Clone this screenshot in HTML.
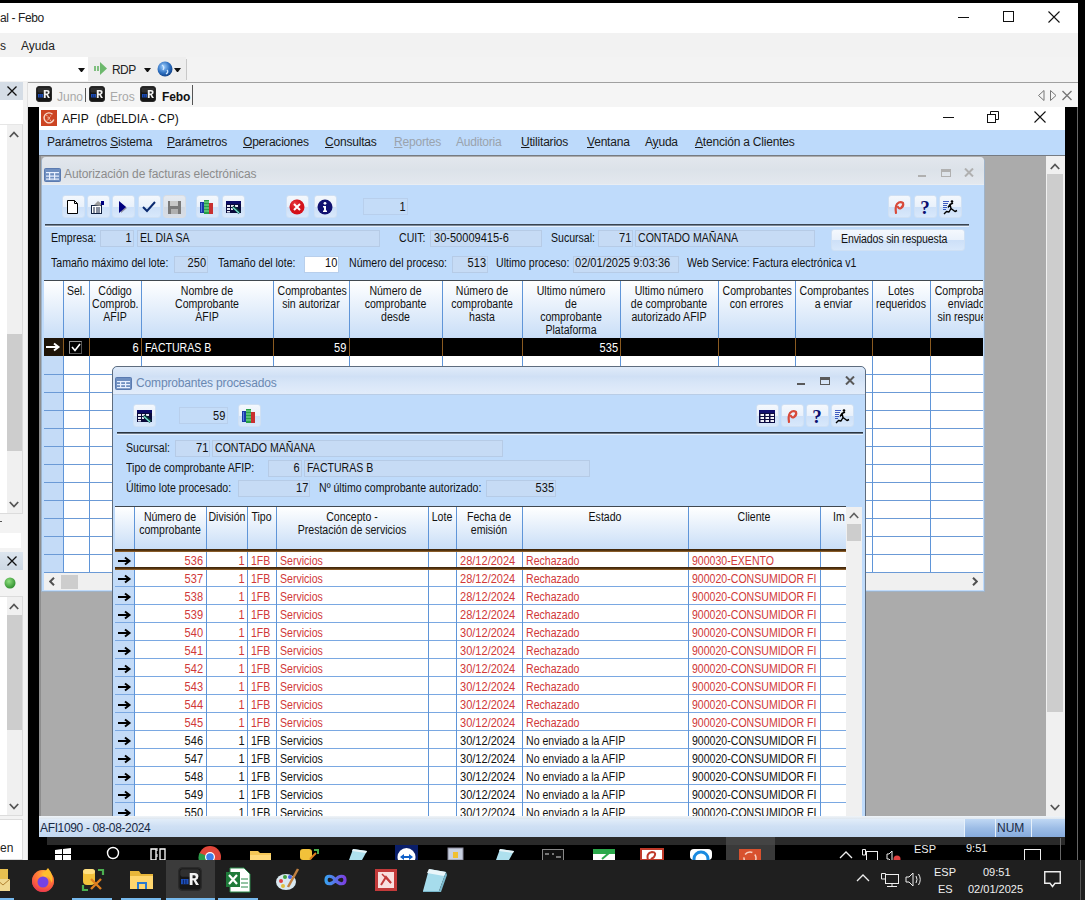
<!DOCTYPE html>
<html><head><meta charset="utf-8">
<style>
*{box-sizing:border-box}
body{margin:0;width:1085px;height:900px;overflow:hidden;background:#000;position:relative;font-family:"Liberation Sans",sans-serif;font-size:11px;color:#000}
.a{position:absolute}
.t{position:absolute;white-space:nowrap;line-height:1;color:#111}
.m{position:absolute;white-space:nowrap;line-height:1;letter-spacing:-0.15px;color:#1a1a1a}
.fld{position:absolute;background:#c6dbf5;border:1px solid #b6cbe6}
.btn{position:absolute;border-radius:3px;border:1px solid #cfe0f4;background:linear-gradient(#f4f8fd 0,#e9f1fb 50%,#cde0f8 52%,#d8e8fb 100%)}
.hdr{position:absolute;background:linear-gradient(#ffffff,#c9def7)}
u{text-decoration:underline;text-underline-offset:1px;text-decoration-thickness:1px}
</style></head><body>

<div class="a" style="left:0px;top:3px;width:1078px;height:30px;background:#fff"></div>
<div class="m" style="left:0px;top:11.84px;font-size:12px;color:#222;letter-spacing:-0.4px">al - Febo</div>
<div class="a" style="left:958px;top:17px;width:11px;height:1px;background:#111"></div>
<div class="a" style="left:1003px;top:11px;width:11px;height:11px;border:1px solid #111"></div>
<svg class="a" style="left:1048px;top:11px" width="12" height="12"><path d="M0.5 0.5L11.5 11.5M11.5 0.5L0.5 11.5" stroke="#111" stroke-width="1.1"/></svg>
<div class="a" style="left:0px;top:33px;width:1078px;height:24px;background:#f2f2f2"></div>
<div class="m" style="left:0px;top:39.84px;font-size:12px;color:#222;letter-spacing:0">s</div>
<div class="m" style="left:21px;top:39.84px;font-size:12px;color:#222;letter-spacing:0">Ayuda</div>
<div class="a" style="left:0px;top:57px;width:1078px;height:25px;background:#f3f3f3"></div>
<div class="a" style="left:88px;top:57px;width:98px;height:24px;background:#eeeeee"></div>
<div class="a" style="left:0px;top:57px;width:88px;height:24px;background:#fff"></div>
<div class="a" style="left:78px;top:68px;width:7px;height:0px;border-top:4px solid #111;border-left:3.5px solid transparent;border-right:3.5px solid transparent;width:7px;height:0"></div>
<svg class="a" style="left:94px;top:62px" width="14" height="13"><rect x="0" y="4" width="2" height="5" fill="#7fbf7f"/><rect x="3" y="4" width="2" height="5" fill="#7fbf7f"/><path d="M6 0L13 6.5L6 13Z" fill="#6cb86c"/></svg>
<div class="m" style="left:112px;top:63.84px;font-size:12px;color:#222;letter-spacing:-0.6px">RDP</div>
<div class="a" style="left:144px;top:68px;width:7px;height:0px;border-top:4px solid #111;border-left:3.5px solid transparent;border-right:3.5px solid transparent;width:7px;height:0"></div>
<svg class="a" style="left:157px;top:61px" width="16" height="16"><defs><radialGradient id="gl" cx="0.4" cy="0.35" r="0.7"><stop offset="0" stop-color="#9fd0ff"/><stop offset="0.6" stop-color="#2d6fc0"/><stop offset="1" stop-color="#0f3c80"/></radialGradient></defs><circle cx="8" cy="8" r="7.5" fill="url(#gl)"/><path d="M5 4Q8 6 6 9M10 9Q12 11 9 13" stroke="#d0e8ff" stroke-width="1.3" fill="none"/></svg>
<div class="a" style="left:174px;top:68px;width:7px;height:0px;border-top:4px solid #111;border-left:3.5px solid transparent;border-right:3.5px solid transparent;width:7px;height:0"></div>
<div class="a" style="left:186px;top:59px;width:1px;height:21px;background:#c8c8c8"></div>
<div class="a" style="left:0px;top:82px;width:28px;height:778px;background:#f3f3f3"></div>
<div class="a" style="left:0px;top:99px;width:23px;height:25px;background:#fff"></div>
<div class="a" style="left:0px;top:82px;width:23px;height:18px;background:#d5dde6"></div>
<svg class="a" style="left:7px;top:86px" width="10" height="10"><path d="M0.5 0.5L9.5 9.5M9.5 0.5L0.5 9.5" stroke="#111" stroke-width="1.3"/></svg>
<div class="a" style="left:27px;top:82px;width:1051px;height:25px;background:#f5f5f5;border-top:1px solid #a0a0a0;border-left:1px solid #a0a0a0"></div>
<svg class="a" style="left:36px;top:86px" width="16" height="16" viewBox="0 0 16 16"><rect x="0.5" y="0.5" width="15" height="15" rx="2.5" fill="#161616" stroke="#2a2a2a"/><rect x="1.5" y="1.5" width="13" height="5" rx="1.5" fill="#3a3a3a" opacity="0.7"/><rect x="2" y="8" width="5" height="3.5" fill="#1d4fb8"/><path d="M3.6 8.5V11.5M5.3 8.5V11.5" stroke="#0a1a50" stroke-width="0.6"/><path d="M7.8 12V4H11Q13.6 4 13.6 6.4Q13.6 8.2 11.9 8.6L14 12H12L10.3 8.9H9.7V12Z M9.7 5.5V7.5H10.9Q11.8 7.5 11.8 6.5Q11.8 5.5 10.9 5.5Z" fill="#f2f2f2" fill-rule="evenodd"/></svg>
<div class="m" style="left:57px;top:90.84px;font-size:12px;color:#a8a8a8;letter-spacing:0">Juno</div>
<div class="a" style="left:85px;top:88px;width:1px;height:14px;background:#555"></div>
<svg class="a" style="left:89px;top:86px" width="16" height="16" viewBox="0 0 16 16"><rect x="0.5" y="0.5" width="15" height="15" rx="2.5" fill="#161616" stroke="#2a2a2a"/><rect x="1.5" y="1.5" width="13" height="5" rx="1.5" fill="#3a3a3a" opacity="0.7"/><rect x="2" y="8" width="5" height="3.5" fill="#1d4fb8"/><path d="M3.6 8.5V11.5M5.3 8.5V11.5" stroke="#0a1a50" stroke-width="0.6"/><path d="M7.8 12V4H11Q13.6 4 13.6 6.4Q13.6 8.2 11.9 8.6L14 12H12L10.3 8.9H9.7V12Z M9.7 5.5V7.5H10.9Q11.8 7.5 11.8 6.5Q11.8 5.5 10.9 5.5Z" fill="#f2f2f2" fill-rule="evenodd"/></svg>
<div class="m" style="left:110px;top:90.84px;font-size:12px;color:#a8a8a8;letter-spacing:0">Eros</div>
<svg class="a" style="left:140px;top:86px" width="16" height="16" viewBox="0 0 16 16"><rect x="0.5" y="0.5" width="15" height="15" rx="2.5" fill="#161616" stroke="#2a2a2a"/><rect x="1.5" y="1.5" width="13" height="5" rx="1.5" fill="#3a3a3a" opacity="0.7"/><rect x="2" y="8" width="5" height="3.5" fill="#1d4fb8"/><path d="M3.6 8.5V11.5M5.3 8.5V11.5" stroke="#0a1a50" stroke-width="0.6"/><path d="M7.8 12V4H11Q13.6 4 13.6 6.4Q13.6 8.2 11.9 8.6L14 12H12L10.3 8.9H9.7V12Z M9.7 5.5V7.5H10.9Q11.8 7.5 11.8 6.5Q11.8 5.5 10.9 5.5Z" fill="#f2f2f2" fill-rule="evenodd"/></svg>
<div class="m" style="left:162px;top:90.84px;font-size:12px;color:#111;letter-spacing:-0.1px"><b>Febo</b></div>
<div class="a" style="left:192px;top:85px;width:1px;height:20px;background:#555"></div>
<svg class="a" style="left:1037px;top:90px" width="40" height="11"><path d="M7 0.5V10.5L1.5 5.5Z" fill="none" stroke="#777"/><path d="M13.5 0.5V10.5L19 5.5Z" fill="none" stroke="#777"/><path d="M25.5 1L34.5 10M34.5 1L25.5 10" stroke="#777" stroke-width="1.4"/></svg>
<div class="a" style="left:0px;top:124px;width:23px;height:390px;background:#fff;border-top:1px solid #e6e6e6;border-right:1px solid #dcdcdc;border-bottom:1px solid #dcdcdc"></div>
<div class="a" style="left:7px;top:125px;width:15px;height:388px;background:#f0f0f0"></div>
<div class="a" style="left:7px;top:334px;width:15px;height:117px;background:#cdcdcd"></div>
<svg class="a" style="left:9px;top:131px" width="10" height="7"><path d="M0.8 6L5 1.5L9.2 6" stroke="#555" stroke-width="1.8" fill="none"/></svg>
<svg class="a" style="left:9px;top:501px" width="10" height="7"><path d="M0.8 1L5 5.5L9.2 1" stroke="#555" stroke-width="1.8" fill="none"/></svg>
<div class="a" style="left:0px;top:533px;width:21px;height:15px;background:#fff"></div>
<div class="a" style="left:0px;top:521px;width:2px;height:1px;background:#555"></div>
<div class="a" style="left:0px;top:552px;width:23px;height:18px;background:linear-gradient(#dce5ee,#cdd8e3)"></div>
<svg class="a" style="left:7px;top:556px" width="10" height="10"><path d="M0.5 0.5L9.5 9.5M9.5 0.5L0.5 9.5" stroke="#111" stroke-width="1.3"/></svg>
<svg class="a" style="left:4px;top:577px" width="12" height="12"><defs><radialGradient id="gd" cx="0.4" cy="0.35" r="0.7"><stop offset="0" stop-color="#8fe07f"/><stop offset="1" stop-color="#2a8a2a"/></radialGradient></defs><circle cx="6" cy="6" r="5.5" fill="url(#gd)"/></svg>
<div class="a" style="left:0px;top:596px;width:23px;height:220px;background:#fff;border:1px solid #dcdcdc;border-left:none"></div>
<div class="a" style="left:7px;top:597px;width:15px;height:218px;background:#f0f0f0"></div>
<div class="a" style="left:7px;top:615px;width:15px;height:115px;background:#cdcdcd"></div>
<svg class="a" style="left:9px;top:603px" width="10" height="7"><path d="M0.8 6L5 1.5L9.2 6" stroke="#555" stroke-width="1.8" fill="none"/></svg>
<svg class="a" style="left:9px;top:803px" width="10" height="7"><path d="M0.8 1L5 5.5L9.2 1" stroke="#555" stroke-width="1.8" fill="none"/></svg>
<div class="a" style="left:0px;top:819px;width:23px;height:41px;background:#fff;border:1px solid #dcdcdc;border-left:none"></div>
<div class="m" style="left:0px;top:841.84px;font-size:12px;color:#222;letter-spacing:0">en</div>
<div class="a" style="left:27px;top:82px;width:1px;height:778px;background:#e0e0e0"></div>
<div class="a" style="left:28px;top:107px;width:11px;height:731px;background:#000"></div>
<div class="a" style="left:1065px;top:107px;width:13px;height:731px;background:#000"></div>
<div class="a" style="left:39px;top:107px;width:1026px;height:23px;background:#fff"></div>
<div class="a" style="left:39px;top:130px;width:1026px;height:27px;background:#bddafb;border-bottom:2px solid #767b82"></div>
<div class="a" style="left:39px;top:156px;width:1007px;height:660px;background:#ababab;border-left:2px solid #8e8e8e"></div>
<div class="a" style="left:1046px;top:156px;width:19px;height:660px;background:#f0f0f0"></div>
<div class="a" style="left:1047px;top:174px;width:16px;height:538px;background:#cdcdcd"></div>
<svg class="a" style="left:1050px;top:163px" width="10" height="7"><path d="M0.8 6L5 1.5L9.2 6" stroke="#555" stroke-width="1.8" fill="none"/></svg>
<svg class="a" style="left:1050px;top:804px" width="10" height="7"><path d="M0.8 1L5 5.5L9.2 1" stroke="#555" stroke-width="1.8" fill="none"/></svg>
<svg class="a" style="left:41px;top:110px" width="16" height="16"><rect width="16" height="16" fill="#cc4422"/><path d="M11.5 4.2A5 5 0 1 0 12.8 9.5" fill="none" stroke="#f8d8c8" stroke-width="1.4"/><path d="M5.5 5L10 11M10 5.5L6 10.5" stroke="#f0b8a0" stroke-width="1.2" stroke-dasharray="1.2 0.8"/></svg>
<div class="m" style="left:62px;top:112.84px;font-size:12px;color:#111;letter-spacing:0">AFIP</div>
<div class="m" style="left:96px;top:112.84px;font-size:12px;color:#111;letter-spacing:0">(dbELDIA - CP)</div>
<div class="a" style="left:943px;top:117px;width:11px;height:1px;background:#111"></div>
<svg class="a" style="left:987px;top:111px" width="12" height="12"><rect x="0.5" y="3.5" width="8" height="8" fill="none" stroke="#111"/><path d="M3.5 3.5V0.5H11.5V8.5H8.5" fill="none" stroke="#111"/></svg>
<svg class="a" style="left:1034px;top:111px" width="12" height="12"><path d="M0.5 0.5L11.5 11.5M11.5 0.5L0.5 11.5" stroke="#111" stroke-width="1.1"/></svg>
<div class="m" style="left:47px;top:135.84px;font-size:12px;color:#1a1a1a;letter-spacing:-0.2px">Parámetros <u>S</u>istema</div>
<div class="m" style="left:167px;top:135.84px;font-size:12px;color:#1a1a1a;letter-spacing:-0.2px"><u>P</u>arámetros</div>
<div class="m" style="left:243px;top:135.84px;font-size:12px;color:#1a1a1a;letter-spacing:-0.2px"><u>O</u>peraciones</div>
<div class="m" style="left:325px;top:135.84px;font-size:12px;color:#1a1a1a;letter-spacing:-0.2px"><u>C</u>onsultas</div>
<div class="m" style="left:394px;top:135.84px;font-size:12px;color:#9aa3ad;letter-spacing:-0.2px"><u>R</u>eportes</div>
<div class="m" style="left:456px;top:135.84px;font-size:12px;color:#9aa3ad;letter-spacing:-0.2px">Auditoria</div>
<div class="m" style="left:521px;top:135.84px;font-size:12px;color:#1a1a1a;letter-spacing:-0.2px"><u>U</u>tilitarios</div>
<div class="m" style="left:587px;top:135.84px;font-size:12px;color:#1a1a1a;letter-spacing:-0.2px"><u>V</u>entana</div>
<div class="m" style="left:645px;top:135.84px;font-size:12px;color:#1a1a1a;letter-spacing:-0.2px">A<u>y</u>uda</div>
<div class="m" style="left:695px;top:135.84px;font-size:12px;color:#1a1a1a;letter-spacing:-0.2px"><u>A</u>tención a Clientes</div>
<div class="a" style="left:41px;top:157px;width:944px;height:435px;background:#bfdbfb;border:1px solid #9fb3c8;border-top-color:#c0c8d0;border-radius:5px 5px 0 0"></div>
<div class="a" style="left:42px;top:157px;width:942px;height:28px;background:linear-gradient(#e2e7ed,#dce2e9 45%,#e3e8ee 100%);border-bottom:1px solid #e9edf2;border-radius:4px 4px 0 0"></div>
<svg class="a" style="left:44px;top:168px" width="17" height="14"><rect x="0.5" y="0.5" width="16" height="13" rx="1" fill="#6f8fc0" stroke="#5a7ab0"/><rect x="2" y="4" width="13" height="1.2" fill="#e8f0ff"/><rect x="2" y="7.5" width="13" height="1.2" fill="#e8f0ff"/><rect x="2" y="10.5" width="13" height="1.2" fill="#e8f0ff"/><rect x="5" y="4" width="1.2" height="8" fill="#e8f0ff"/><rect x="10" y="4" width="1.2" height="8" fill="#e8f0ff"/></svg>
<div class="m" style="left:64px;top:167.84px;font-size:12px;color:#8c8c8c;letter-spacing:-0.1px">Autorización de facturas electrónicas</div>
<div class="a" style="left:918px;top:175px;width:8px;height:2px;background:#b0b0b0"></div>
<div class="a" style="left:941px;top:169px;width:10px;height:8px;border:1px solid #b0b0b0;border-top-width:3px"></div>
<svg class="a" style="left:964px;top:168px" width="10" height="9"><path d="M1 0.5L9 8.5M9 0.5L1 8.5" stroke="#b0b0b0" stroke-width="2"/></svg>
<div class="btn" style="left:62px;top:195px;width:23px;height:23px;"></div>
<svg class="a" style="left:65px;top:199px" width="16" height="16" viewBox="0 0 16 16"><defs><radialGradient id="rg" cx="0.35" cy="0.3" r="0.7"><stop offset="0" stop-color="#ff6060" stop-opacity="0.6"/><stop offset="1" stop-color="#a00000" stop-opacity="0"/></radialGradient></defs><path d="M2.5 1.5H9.5L12.5 4.5V14.5H2.5Z" fill="#fff" stroke="#000"/><path d="M9.5 1.5V4.5H12.5" fill="none" stroke="#000"/></svg>
<div class="btn" style="left:87px;top:195px;width:23px;height:23px;"></div>
<svg class="a" style="left:90px;top:199px" width="16" height="16" viewBox="0 0 16 16"><defs><radialGradient id="rg" cx="0.35" cy="0.3" r="0.7"><stop offset="0" stop-color="#ff6060" stop-opacity="0.6"/><stop offset="1" stop-color="#a00000" stop-opacity="0"/></radialGradient></defs><rect x="1.5" y="6.5" width="10" height="8" fill="#fff" stroke="#102040"/><path d="M3 9H5M6 9H10M3 11H5M6 11H10M3 13H5M6 13H10" stroke="#102040"/><path d="M4 6L8 2L12 5L10 7Z" fill="#9a9a9a"/><path d="M11 2H14V6H11Z" fill="#000080"/></svg>
<div class="btn" style="left:112px;top:195px;width:23px;height:23px;"></div>
<svg class="a" style="left:115px;top:199px" width="16" height="16" viewBox="0 0 16 16"><defs><radialGradient id="rg" cx="0.35" cy="0.3" r="0.7"><stop offset="0" stop-color="#ff6060" stop-opacity="0.6"/><stop offset="1" stop-color="#a00000" stop-opacity="0"/></radialGradient></defs><path d="M6 4L12 9L6 14Z" fill="#9090a0"/><path d="M4 2L11 8L4 14Z" fill="#000080"/></svg>
<div class="btn" style="left:138px;top:195px;width:23px;height:23px;"></div>
<svg class="a" style="left:141px;top:199px" width="16" height="16" viewBox="0 0 16 16"><defs><radialGradient id="rg" cx="0.35" cy="0.3" r="0.7"><stop offset="0" stop-color="#ff6060" stop-opacity="0.6"/><stop offset="1" stop-color="#a00000" stop-opacity="0"/></radialGradient></defs><path d="M2 8L6 12L14 3" stroke="#0a2a70" stroke-width="2" fill="none"/></svg>
<div class="btn" style="left:163px;top:195px;width:23px;height:23px;background:linear-gradient(#e6eaf0 0,#dde3ea 50%,#d2d9e2 52%,#d8dee6 100%);border-color:#d8dde4"></div>
<svg class="a" style="left:166px;top:199px" width="16" height="16" viewBox="0 0 16 16"><defs><radialGradient id="rg" cx="0.35" cy="0.3" r="0.7"><stop offset="0" stop-color="#ff6060" stop-opacity="0.6"/><stop offset="1" stop-color="#a00000" stop-opacity="0"/></radialGradient></defs><rect x="2" y="2" width="13" height="13" fill="#7a7a7a"/><rect x="4" y="2" width="8" height="5" fill="#c8c8c8"/><rect x="5" y="10" width="7" height="5" fill="#b0b0b0"/></svg>
<div class="btn" style="left:196px;top:195px;width:23px;height:23px;"></div>
<svg class="a" style="left:199px;top:199px" width="16" height="16" viewBox="0 0 16 16"><defs><radialGradient id="rg" cx="0.35" cy="0.3" r="0.7"><stop offset="0" stop-color="#ff6060" stop-opacity="0.6"/><stop offset="1" stop-color="#a00000" stop-opacity="0"/></radialGradient></defs><rect x="1" y="3" width="4" height="11" fill="#1a3aa8"/><rect x="5" y="1" width="5" height="14" fill="#28a048"/><path d="M5 3H10M5 6H10M5 9H10M5 12H10" stroke="#8ae0a0" stroke-width="1"/><rect x="10" y="4" width="4" height="11" fill="#c83030"/><rect x="2" y="4" width="1" height="9" fill="#5a7ae0"/></svg>
<div class="btn" style="left:222px;top:195px;width:23px;height:23px;"></div>
<svg class="a" style="left:225px;top:199px" width="16" height="16" viewBox="0 0 16 16"><defs><radialGradient id="rg" cx="0.35" cy="0.3" r="0.7"><stop offset="0" stop-color="#ff6060" stop-opacity="0.6"/><stop offset="1" stop-color="#a00000" stop-opacity="0"/></radialGradient></defs><rect x="1" y="2" width="15" height="12" fill="#0a0a3a"/><rect x="1" y="2" width="15" height="3" fill="#0c0c66"/><path d="M2 6H5V8H2ZM6 6H9V8H6ZM10 6H13V8H10ZM2 9H5V11H2ZM6 9H8V11H6ZM2 12H5V13.5H2Z" fill="#e8eaf4"/><path d="M6.5 8.5L13.5 15L16 12.5L9 6.5Z" fill="#0a3a36"/><path d="M8 8.6L14 14" stroke="#7ae0d0" stroke-width="1.4"/></svg>
<div class="btn" style="left:286px;top:195px;width:23px;height:23px;"></div>
<svg class="a" style="left:289px;top:199px" width="16" height="16" viewBox="0 0 16 16"><defs><radialGradient id="rg" cx="0.35" cy="0.3" r="0.7"><stop offset="0" stop-color="#ff6060" stop-opacity="0.6"/><stop offset="1" stop-color="#a00000" stop-opacity="0"/></radialGradient></defs><circle cx="8" cy="8" r="7.5" fill="#d8101a"/><circle cx="8" cy="8" r="7.5" fill="url(#rg)"/><path d="M5 5L11 11M11 5L5 11" stroke="#fff" stroke-width="2"/></svg>
<div class="btn" style="left:314px;top:195px;width:23px;height:23px;"></div>
<svg class="a" style="left:317px;top:199px" width="16" height="16" viewBox="0 0 16 16"><defs><radialGradient id="rg" cx="0.35" cy="0.3" r="0.7"><stop offset="0" stop-color="#ff6060" stop-opacity="0.6"/><stop offset="1" stop-color="#a00000" stop-opacity="0"/></radialGradient></defs><circle cx="8" cy="8" r="7.5" fill="#101070"/><circle cx="8" cy="4.3" r="1.4" fill="#fff"/><path d="M6 7H9V11.5H10V13H6V11.5H7V8.5H6Z" fill="#fff"/></svg>
<div class="btn" style="left:888px;top:195px;width:23px;height:23px;"></div>
<svg class="a" style="left:891px;top:199px" width="16" height="16" viewBox="0 0 16 16"><defs><radialGradient id="rg" cx="0.35" cy="0.3" r="0.7"><stop offset="0" stop-color="#ff6060" stop-opacity="0.6"/><stop offset="1" stop-color="#a00000" stop-opacity="0"/></radialGradient></defs><path d="M5 14Q4 8 6 5Q9 2 12 4Q13 7 10 9Q8 10 7 8" stroke="#d84a3a" stroke-width="2.2" fill="none" stroke-linecap="round"/></svg>
<div class="btn" style="left:914px;top:195px;width:23px;height:23px;"></div>
<svg class="a" style="left:917px;top:199px" width="16" height="16" viewBox="0 0 16 16"><defs><radialGradient id="rg" cx="0.35" cy="0.3" r="0.7"><stop offset="0" stop-color="#ff6060" stop-opacity="0.6"/><stop offset="1" stop-color="#a00000" stop-opacity="0"/></radialGradient></defs><text x="8" y="14.5" text-anchor="middle" font-family="Liberation Serif" font-weight="bold" font-size="19" fill="#0a1070">?</text></svg>
<div class="btn" style="left:939px;top:195px;width:23px;height:23px;"></div>
<svg class="a" style="left:942px;top:199px" width="16" height="16" viewBox="0 0 16 16"><defs><radialGradient id="rg" cx="0.35" cy="0.3" r="0.7"><stop offset="0" stop-color="#ff6060" stop-opacity="0.6"/><stop offset="1" stop-color="#a00000" stop-opacity="0"/></radialGradient></defs><path d="M1 2.5H7M1 4.5H6M1 6.5H5M1 8.5H5M1 10.5H4" stroke="#2a4ab8" stroke-width="0.9"/><path d="M2 15L4.5 12.5L7 13L9 9.5L13 12.5L15 11.5M9 9.5L8 5.5L11 4M8 5.5L6 8.5" stroke="#000" stroke-width="1.4" fill="none" stroke-linejoin="round"/><circle cx="10" cy="2.5" r="1.3" fill="#000"/></svg>
<div class="a" style="left:363px;top:198px;width:45px;height:17px;background:#c4dcf8;border:1px solid #b8cfec"></div>
<div class="t" style="right:679px;top:200.84px;font-size:12px;transform:scaleX(0.92);transform-origin:100% 0;">1</div>
<div class="a" style="left:45px;top:224px;width:924px;height:2px;background:#3a4450;border-bottom:1px solid #7a8898"></div>
<div class="a" style="left:45px;top:226px;width:924px;height:1px;background:#e6f0fc"></div>
<div class="t" style="left:51px;top:231.84px;font-size:12px;transform:scaleX(0.88);transform-origin:0 0;">Empresa:</div>
<div class="fld" style="left:100px;top:230px;width:34px;height:17px"></div>
<div class="t" style="right:953px;top:231.84px;font-size:12px;transform:scaleX(0.92);transform-origin:100% 0;">1</div>
<div class="fld" style="left:137px;top:230px;width:243px;height:17px"></div>
<div class="t" style="left:140px;top:231.84px;font-size:12px;transform:scaleX(0.88);transform-origin:0 0;">EL DIA SA</div>
<div class="t" style="left:399px;top:231.84px;font-size:12px;transform:scaleX(0.88);transform-origin:0 0;">CUIT:</div>
<div class="fld" style="left:430px;top:230px;width:112px;height:17px"></div>
<div class="t" style="left:434px;top:231.84px;font-size:12px;transform:scaleX(0.92);transform-origin:0 0;">30-50009415-6</div>
<div class="t" style="left:551px;top:231.84px;font-size:12px;transform:scaleX(0.88);transform-origin:0 0;">Sucursal:</div>
<div class="fld" style="left:598px;top:230px;width:35px;height:17px"></div>
<div class="t" style="right:454px;top:231.84px;font-size:12px;transform:scaleX(0.92);transform-origin:100% 0;">71</div>
<div class="fld" style="left:635px;top:230px;width:180px;height:17px"></div>
<div class="t" style="left:638px;top:231.84px;font-size:12px;transform:scaleX(0.88);transform-origin:0 0;">CONTADO MAÑANA</div>
<div class="btn" style="left:831px;top:229px;width:134px;height:22px"></div>
<div class="t" style="left:841px;top:232.84px;font-size:12px;transform:scaleX(0.88);transform-origin:0 0;letter-spacing:-0.15px">Enviados sin respuesta</div>
<div class="t" style="left:51px;top:256.84px;font-size:12px;transform:scaleX(0.88);transform-origin:0 0;">Tamaño máximo del lote:</div>
<div class="fld" style="left:174px;top:256px;width:34px;height:17px"></div>
<div class="t" style="right:879px;top:256.84px;font-size:12px;transform:scaleX(0.92);transform-origin:100% 0;">250</div>
<div class="t" style="left:218px;top:256.84px;font-size:12px;transform:scaleX(0.88);transform-origin:0 0;">Tamaño del lote:</div>
<div class="a" style="left:304px;top:256px;width:35px;height:17px;background:#fff;border:1px solid #b8cfec"></div>
<div class="t" style="right:748px;top:256.84px;font-size:12px;transform:scaleX(0.92);transform-origin:100% 0;">10</div>
<div class="t" style="left:349px;top:256.84px;font-size:12px;transform:scaleX(0.88);transform-origin:0 0;">Número del proceso:</div>
<div class="fld" style="left:452px;top:256px;width:36px;height:17px"></div>
<div class="t" style="right:599px;top:256.84px;font-size:12px;transform:scaleX(0.92);transform-origin:100% 0;">513</div>
<div class="t" style="left:496px;top:256.84px;font-size:12px;transform:scaleX(0.88);transform-origin:0 0;">Ultimo proceso:</div>
<div class="fld" style="left:573px;top:256px;width:106px;height:17px"></div>
<div class="t" style="left:575px;top:256.84px;font-size:12px;transform:scaleX(0.92);transform-origin:0 0;">02/01/2025 9:03:36</div>
<div class="t" style="left:687px;top:256.84px;font-size:12px;transform:scaleX(0.88);transform-origin:0 0;">Web Service: Factura electrónica v1</div>
<div class="a" style="left:44px;top:280px;width:939px;height:293px;background:#fff;border-top:1px solid #404850"></div>
<div class="hdr" style="left:44px;top:281px;width:939px;height:57px"></div>
<div class="a" style="left:44px;top:338px;width:19px;height:234px;background:#c4dbf7"></div>
<div class="a" style="left:44px;top:374px;width:939px;height:1px;background:#6b9ad6"></div>
<div class="a" style="left:44px;top:392px;width:939px;height:1px;background:#6b9ad6"></div>
<div class="a" style="left:44px;top:410px;width:939px;height:1px;background:#6b9ad6"></div>
<div class="a" style="left:44px;top:428px;width:939px;height:1px;background:#6b9ad6"></div>
<div class="a" style="left:44px;top:446px;width:939px;height:1px;background:#6b9ad6"></div>
<div class="a" style="left:44px;top:464px;width:939px;height:1px;background:#6b9ad6"></div>
<div class="a" style="left:44px;top:482px;width:939px;height:1px;background:#6b9ad6"></div>
<div class="a" style="left:44px;top:500px;width:939px;height:1px;background:#6b9ad6"></div>
<div class="a" style="left:44px;top:518px;width:939px;height:1px;background:#6b9ad6"></div>
<div class="a" style="left:44px;top:536px;width:939px;height:1px;background:#6b9ad6"></div>
<div class="a" style="left:44px;top:554px;width:939px;height:1px;background:#6b9ad6"></div>
<div class="a" style="left:44px;top:572px;width:939px;height:1px;background:#6b9ad6"></div>
<div class="a" style="left:44px;top:338px;width:939px;height:18px;background:#000"></div>
<div class="a" style="left:44px;top:338px;width:19px;height:18px;background:#1e1408"></div>
<div class="a" style="left:63px;top:281px;width:1px;height:291px;background:#5f95d8"></div>
<div class="a" style="left:89px;top:281px;width:1px;height:291px;background:#5f95d8"></div>
<div class="a" style="left:141px;top:281px;width:1px;height:291px;background:#5f95d8"></div>
<div class="a" style="left:273px;top:281px;width:1px;height:291px;background:#5f95d8"></div>
<div class="a" style="left:349px;top:281px;width:1px;height:291px;background:#5f95d8"></div>
<div class="a" style="left:442px;top:281px;width:1px;height:291px;background:#5f95d8"></div>
<div class="a" style="left:522px;top:281px;width:1px;height:291px;background:#5f95d8"></div>
<div class="a" style="left:620px;top:281px;width:1px;height:291px;background:#5f95d8"></div>
<div class="a" style="left:718px;top:281px;width:1px;height:291px;background:#5f95d8"></div>
<div class="a" style="left:795px;top:281px;width:1px;height:291px;background:#5f95d8"></div>
<div class="a" style="left:872px;top:281px;width:1px;height:291px;background:#5f95d8"></div>
<div class="a" style="left:930px;top:281px;width:1px;height:291px;background:#5f95d8"></div>
<div class="a" style="left:63px;top:338px;width:1px;height:18px;background:#8a5a20"></div>
<div class="a" style="left:89px;top:338px;width:1px;height:18px;background:#8a5a20"></div>
<div class="a" style="left:141px;top:338px;width:1px;height:18px;background:#8a5a20"></div>
<div class="a" style="left:273px;top:338px;width:1px;height:18px;background:#8a5a20"></div>
<div class="a" style="left:349px;top:338px;width:1px;height:18px;background:#8a5a20"></div>
<div class="a" style="left:442px;top:338px;width:1px;height:18px;background:#8a5a20"></div>
<div class="a" style="left:522px;top:338px;width:1px;height:18px;background:#8a5a20"></div>
<div class="a" style="left:620px;top:338px;width:1px;height:18px;background:#8a5a20"></div>
<div class="a" style="left:718px;top:338px;width:1px;height:18px;background:#8a5a20"></div>
<div class="a" style="left:795px;top:338px;width:1px;height:18px;background:#8a5a20"></div>
<div class="a" style="left:872px;top:338px;width:1px;height:18px;background:#8a5a20"></div>
<div class="a" style="left:930px;top:338px;width:1px;height:18px;background:#8a5a20"></div>
<div class="a" style="left:44px;top:281px;width:939px;height:57px;overflow:hidden">
<div class="t" style="left:19px;width:26px;text-align:center;top:3.84px;font-size:12px;transform:scaleX(0.88);transform-origin:50% 0">Sel.</div>
<div class="t" style="left:45px;width:52px;text-align:center;top:3.84px;font-size:12px;transform:scaleX(0.88);transform-origin:50% 0">Código</div>
<div class="t" style="left:45px;width:52px;text-align:center;top:16.84px;font-size:12px;transform:scaleX(0.88);transform-origin:50% 0">Comprob.</div>
<div class="t" style="left:45px;width:52px;text-align:center;top:29.84px;font-size:12px;transform:scaleX(0.88);transform-origin:50% 0">AFIP</div>
<div class="t" style="left:97px;width:132px;text-align:center;top:3.84px;font-size:12px;transform:scaleX(0.88);transform-origin:50% 0">Nombre de</div>
<div class="t" style="left:97px;width:132px;text-align:center;top:16.84px;font-size:12px;transform:scaleX(0.88);transform-origin:50% 0">Comprobante</div>
<div class="t" style="left:97px;width:132px;text-align:center;top:29.84px;font-size:12px;transform:scaleX(0.88);transform-origin:50% 0">AFIP</div>
<div class="t" style="left:229px;width:76px;text-align:center;top:3.84px;font-size:12px;transform:scaleX(0.88);transform-origin:50% 0">Comprobantes</div>
<div class="t" style="left:229px;width:76px;text-align:center;top:16.84px;font-size:12px;transform:scaleX(0.88);transform-origin:50% 0">sin autorizar</div>
<div class="t" style="left:305px;width:93px;text-align:center;top:3.84px;font-size:12px;transform:scaleX(0.88);transform-origin:50% 0">Número de</div>
<div class="t" style="left:305px;width:93px;text-align:center;top:16.84px;font-size:12px;transform:scaleX(0.88);transform-origin:50% 0">comprobante</div>
<div class="t" style="left:305px;width:93px;text-align:center;top:29.84px;font-size:12px;transform:scaleX(0.88);transform-origin:50% 0">desde</div>
<div class="t" style="left:398px;width:80px;text-align:center;top:3.84px;font-size:12px;transform:scaleX(0.88);transform-origin:50% 0">Número de</div>
<div class="t" style="left:398px;width:80px;text-align:center;top:16.84px;font-size:12px;transform:scaleX(0.88);transform-origin:50% 0">comprobante</div>
<div class="t" style="left:398px;width:80px;text-align:center;top:29.84px;font-size:12px;transform:scaleX(0.88);transform-origin:50% 0">hasta</div>
<div class="t" style="left:478px;width:98px;text-align:center;top:3.84px;font-size:12px;transform:scaleX(0.88);transform-origin:50% 0">Ultimo número</div>
<div class="t" style="left:478px;width:98px;text-align:center;top:16.84px;font-size:12px;transform:scaleX(0.88);transform-origin:50% 0">de</div>
<div class="t" style="left:478px;width:98px;text-align:center;top:29.84px;font-size:12px;transform:scaleX(0.88);transform-origin:50% 0">comprobante</div>
<div class="t" style="left:478px;width:98px;text-align:center;top:42.84px;font-size:12px;transform:scaleX(0.88);transform-origin:50% 0">Plataforma</div>
<div class="t" style="left:576px;width:98px;text-align:center;top:3.84px;font-size:12px;transform:scaleX(0.88);transform-origin:50% 0">Ultimo número</div>
<div class="t" style="left:576px;width:98px;text-align:center;top:16.84px;font-size:12px;transform:scaleX(0.88);transform-origin:50% 0">de comprobante</div>
<div class="t" style="left:576px;width:98px;text-align:center;top:29.84px;font-size:12px;transform:scaleX(0.88);transform-origin:50% 0">autorizado AFIP</div>
<div class="t" style="left:674px;width:77px;text-align:center;top:3.84px;font-size:12px;transform:scaleX(0.88);transform-origin:50% 0">Comprobantes</div>
<div class="t" style="left:674px;width:77px;text-align:center;top:16.84px;font-size:12px;transform:scaleX(0.88);transform-origin:50% 0">con errores</div>
<div class="t" style="left:751px;width:77px;text-align:center;top:3.84px;font-size:12px;transform:scaleX(0.88);transform-origin:50% 0">Comprobantes</div>
<div class="t" style="left:751px;width:77px;text-align:center;top:16.84px;font-size:12px;transform:scaleX(0.88);transform-origin:50% 0">a enviar</div>
<div class="t" style="left:828px;width:58px;text-align:center;top:3.84px;font-size:12px;transform:scaleX(0.88);transform-origin:50% 0">Lotes</div>
<div class="t" style="left:828px;width:58px;text-align:center;top:16.84px;font-size:12px;transform:scaleX(0.88);transform-origin:50% 0">requeridos</div>
<div class="t" style="left:886px;width:78px;text-align:center;top:3.84px;font-size:12px;transform:scaleX(0.88);transform-origin:50% 0">Comprobantes</div>
<div class="t" style="left:886px;width:78px;text-align:center;top:16.84px;font-size:12px;transform:scaleX(0.88);transform-origin:50% 0">enviados</div>
<div class="t" style="left:886px;width:78px;text-align:center;top:29.84px;font-size:12px;transform:scaleX(0.88);transform-origin:50% 0">sin respuesta</div>
</div>
<svg class="a" style="left:46px;top:342px" width="15" height="10"><path d="M0 5H11M8 1.5L12.5 5L8 8.5" stroke="#fff" stroke-width="2" fill="none"/></svg>
<div class="a" style="left:69px;top:341px;width:13px;height:13px;border:1px solid #909090;border-right-color:#555;border-bottom-color:#555"></div>
<svg class="a" style="left:71px;top:343px" width="10" height="9"><path d="M1 4L4 7.5L9 1" stroke="#fff" stroke-width="1.6" fill="none"/></svg>
<div class="t" style="right:946px;top:341.84px;font-size:12px;transform:scaleX(0.92);transform-origin:100% 0;color:#fff">6</div>
<div class="t" style="left:145px;top:341.84px;font-size:12px;transform:scaleX(0.88);transform-origin:0 0;color:#fff">FACTURAS B</div>
<div class="t" style="right:739px;top:341.84px;font-size:12px;transform:scaleX(0.92);transform-origin:100% 0;color:#fff">59</div>
<div class="t" style="right:467px;top:341.84px;font-size:12px;transform:scaleX(0.92);transform-origin:100% 0;color:#fff">535</div>
<div class="a" style="left:44px;top:573px;width:939px;height:17px;background:#f0f0f0"></div>
<div class="a" style="left:61px;top:575px;width:17px;height:14px;background:#cdcdcd"></div>
<svg class="a" style="left:49px;top:577px" width="6" height="9"><path d="M5 0.8L1.2 4.5L5 8.2" stroke="#505050" stroke-width="2" fill="none"/></svg>
<svg class="a" style="left:972px;top:577px" width="6" height="9"><path d="M1 0.8L4.8 4.5L1 8.2" stroke="#505050" stroke-width="2" fill="none"/></svg>
<div class="a" style="left:112px;top:366px;width:754px;height:460px;background:#bfdbfb;border:1px solid #5e6c7e;border-radius:5px 5px 0 0"></div>
<div class="a" style="left:113px;top:367px;width:752px;height:28px;background:linear-gradient(#e0ebf9 0%,#d0e0f5 35%,#d8e6f8 60%,#e2ecfa 100%);border-bottom:1px solid #b9cde6;border-radius:5px 5px 0 0"></div>
<svg class="a" style="left:115px;top:377px" width="17" height="13"><rect x="0.5" y="0.5" width="16" height="12" rx="1" fill="#6f8fc0" stroke="#5a7ab0"/><rect x="2" y="4" width="13" height="1.2" fill="#e8f0ff"/><rect x="2" y="7" width="13" height="1.2" fill="#e8f0ff"/><rect x="2" y="10" width="13" height="1.2" fill="#e8f0ff"/><rect x="5" y="4" width="1.2" height="7" fill="#e8f0ff"/><rect x="10" y="4" width="1.2" height="7" fill="#e8f0ff"/></svg>
<div class="m" style="left:136px;top:376.84px;font-size:12px;color:#6a88b2;letter-spacing:-0.15px">Comprobantes procesados</div>
<div class="a" style="left:797px;top:383px;width:8px;height:2px;background:#5a5a5a"></div>
<div class="a" style="left:820px;top:377px;width:10px;height:8px;border:1px solid #5a5a5a;border-top-width:3px"></div>
<svg class="a" style="left:845px;top:376px" width="10" height="9"><path d="M1 0.5L9 8.5M9 0.5L1 8.5" stroke="#5a5a5a" stroke-width="2"/></svg>
<div class="btn" style="left:133px;top:404px;width:23px;height:23px"></div>
<svg class="a" style="left:136px;top:408px" width="16" height="16" viewBox="0 0 16 16"><defs><radialGradient id="rg" cx="0.35" cy="0.3" r="0.7"><stop offset="0" stop-color="#ff6060" stop-opacity="0.6"/><stop offset="1" stop-color="#a00000" stop-opacity="0"/></radialGradient></defs><rect x="1" y="2" width="15" height="12" fill="#0a0a3a"/><rect x="1" y="2" width="15" height="3" fill="#0c0c66"/><path d="M2 6H5V8H2ZM6 6H9V8H6ZM10 6H13V8H10ZM2 9H5V11H2ZM6 9H8V11H6ZM2 12H5V13.5H2Z" fill="#e8eaf4"/><path d="M6.5 8.5L13.5 15L16 12.5L9 6.5Z" fill="#0a3a36"/><path d="M8 8.6L14 14" stroke="#7ae0d0" stroke-width="1.4"/></svg>
<div class="btn" style="left:238px;top:404px;width:23px;height:23px"></div>
<svg class="a" style="left:241px;top:408px" width="16" height="16" viewBox="0 0 16 16"><defs><radialGradient id="rg" cx="0.35" cy="0.3" r="0.7"><stop offset="0" stop-color="#ff6060" stop-opacity="0.6"/><stop offset="1" stop-color="#a00000" stop-opacity="0"/></radialGradient></defs><rect x="1" y="3" width="4" height="11" fill="#1a3aa8"/><rect x="5" y="1" width="5" height="14" fill="#28a048"/><path d="M5 3H10M5 6H10M5 9H10M5 12H10" stroke="#8ae0a0" stroke-width="1"/><rect x="10" y="4" width="4" height="11" fill="#c83030"/><rect x="2" y="4" width="1" height="9" fill="#5a7ae0"/></svg>
<div class="btn" style="left:756px;top:404px;width:23px;height:23px"></div>
<svg class="a" style="left:759px;top:408px" width="16" height="16" viewBox="0 0 16 16"><defs><radialGradient id="rg" cx="0.35" cy="0.3" r="0.7"><stop offset="0" stop-color="#ff6060" stop-opacity="0.6"/><stop offset="1" stop-color="#a00000" stop-opacity="0"/></radialGradient></defs><rect x="0" y="2" width="16" height="13" fill="#0a0a40"/><rect x="0" y="2" width="16" height="3" fill="#101070"/><path d="M1.5 6H5V8H1.5ZM6.5 6H10V8H6.5ZM11.5 6H15V8H11.5ZM1.5 9H5V11H1.5ZM6.5 9H10V11H6.5ZM11.5 9H15V11H11.5ZM1.5 12H5V14H1.5ZM6.5 12H10V14H6.5ZM11.5 12H15V14H11.5Z" fill="#f0f0f8"/></svg>
<div class="btn" style="left:781px;top:404px;width:23px;height:23px"></div>
<svg class="a" style="left:784px;top:408px" width="16" height="16" viewBox="0 0 16 16"><defs><radialGradient id="rg" cx="0.35" cy="0.3" r="0.7"><stop offset="0" stop-color="#ff6060" stop-opacity="0.6"/><stop offset="1" stop-color="#a00000" stop-opacity="0"/></radialGradient></defs><path d="M5 14Q4 8 6 5Q9 2 12 4Q13 7 10 9Q8 10 7 8" stroke="#d84a3a" stroke-width="2.2" fill="none" stroke-linecap="round"/></svg>
<div class="btn" style="left:806px;top:404px;width:23px;height:23px"></div>
<svg class="a" style="left:809px;top:408px" width="16" height="16" viewBox="0 0 16 16"><defs><radialGradient id="rg" cx="0.35" cy="0.3" r="0.7"><stop offset="0" stop-color="#ff6060" stop-opacity="0.6"/><stop offset="1" stop-color="#a00000" stop-opacity="0"/></radialGradient></defs><text x="8" y="14.5" text-anchor="middle" font-family="Liberation Serif" font-weight="bold" font-size="19" fill="#0a1070">?</text></svg>
<div class="btn" style="left:831px;top:404px;width:23px;height:23px"></div>
<svg class="a" style="left:834px;top:408px" width="16" height="16" viewBox="0 0 16 16"><defs><radialGradient id="rg" cx="0.35" cy="0.3" r="0.7"><stop offset="0" stop-color="#ff6060" stop-opacity="0.6"/><stop offset="1" stop-color="#a00000" stop-opacity="0"/></radialGradient></defs><path d="M1 2.5H7M1 4.5H6M1 6.5H5M1 8.5H5M1 10.5H4" stroke="#2a4ab8" stroke-width="0.9"/><path d="M2 15L4.5 12.5L7 13L9 9.5L13 12.5L15 11.5M9 9.5L8 5.5L11 4M8 5.5L6 8.5" stroke="#000" stroke-width="1.4" fill="none" stroke-linejoin="round"/><circle cx="10" cy="2.5" r="1.3" fill="#000"/></svg>
<div class="a" style="left:179px;top:407px;width:49px;height:17px;background:#c4dcf8;border:1px solid #b8cfec"></div>
<div class="t" style="right:860px;top:409.84px;font-size:12px;transform:scaleX(0.92);transform-origin:100% 0;">59</div>
<div class="a" style="left:117px;top:432px;width:746px;height:2px;background:#2a3440;border-bottom:1px solid #6a7888"></div>
<div class="a" style="left:117px;top:434px;width:746px;height:1px;background:#e6f0fc"></div>
<div class="t" style="left:126px;top:441.84px;font-size:12px;transform:scaleX(0.88);transform-origin:0 0;">Sucursal:</div>
<div class="fld" style="left:175px;top:440px;width:35px;height:17px"></div>
<div class="t" style="right:877px;top:441.84px;font-size:12px;transform:scaleX(0.92);transform-origin:100% 0;">71</div>
<div class="fld" style="left:212px;top:440px;width:291px;height:17px"></div>
<div class="t" style="left:215px;top:441.84px;font-size:12px;transform:scaleX(0.88);transform-origin:0 0;">CONTADO MAÑANA</div>
<div class="t" style="left:126px;top:461.84px;font-size:12px;transform:scaleX(0.88);transform-origin:0 0;">Tipo de comprobante AFIP:</div>
<div class="fld" style="left:268px;top:460px;width:34px;height:17px"></div>
<div class="t" style="right:785px;top:461.84px;font-size:12px;transform:scaleX(0.92);transform-origin:100% 0;">6</div>
<div class="fld" style="left:304px;top:460px;width:286px;height:17px"></div>
<div class="t" style="left:307px;top:461.84px;font-size:12px;transform:scaleX(0.88);transform-origin:0 0;">FACTURAS B</div>
<div class="t" style="left:126px;top:481.84px;font-size:12px;transform:scaleX(0.88);transform-origin:0 0;">Último lote procesado:</div>
<div class="fld" style="left:238px;top:480px;width:72px;height:17px"></div>
<div class="t" style="right:777px;top:481.84px;font-size:12px;transform:scaleX(0.92);transform-origin:100% 0;">17</div>
<div class="t" style="left:319px;top:481.84px;font-size:12px;transform:scaleX(0.88);transform-origin:0 0;">Nº último comprobante autorizado:</div>
<div class="fld" style="left:486px;top:480px;width:70px;height:17px"></div>
<div class="t" style="right:531px;top:481.84px;font-size:12px;transform:scaleX(0.92);transform-origin:100% 0;">535</div>
<div class="a" style="left:115px;top:506px;width:731px;height:312px;background:#fff;border-top:1px solid #404850"></div>
<div class="hdr" style="left:115px;top:507px;width:731px;height:42px"></div>
<div class="a" style="left:115px;top:549px;width:19px;height:269px;background:#c4dbf7"></div>
<div class="a" style="left:115px;top:586px;width:731px;height:1px;background:#7aa8e2"></div>
<div class="a" style="left:115px;top:604px;width:731px;height:1px;background:#7aa8e2"></div>
<div class="a" style="left:115px;top:622px;width:731px;height:1px;background:#7aa8e2"></div>
<div class="a" style="left:115px;top:640px;width:731px;height:1px;background:#7aa8e2"></div>
<div class="a" style="left:115px;top:658px;width:731px;height:1px;background:#7aa8e2"></div>
<div class="a" style="left:115px;top:676px;width:731px;height:1px;background:#7aa8e2"></div>
<div class="a" style="left:115px;top:694px;width:731px;height:1px;background:#7aa8e2"></div>
<div class="a" style="left:115px;top:712px;width:731px;height:1px;background:#7aa8e2"></div>
<div class="a" style="left:115px;top:730px;width:731px;height:1px;background:#7aa8e2"></div>
<div class="a" style="left:115px;top:748px;width:731px;height:1px;background:#7aa8e2"></div>
<div class="a" style="left:115px;top:766px;width:731px;height:1px;background:#7aa8e2"></div>
<div class="a" style="left:115px;top:784px;width:731px;height:1px;background:#7aa8e2"></div>
<div class="a" style="left:115px;top:802px;width:731px;height:1px;background:#7aa8e2"></div>
<div class="a" style="left:134px;top:507px;width:1px;height:311px;background:#5f95d8"></div>
<div class="a" style="left:206px;top:507px;width:1px;height:311px;background:#5f95d8"></div>
<div class="a" style="left:247px;top:507px;width:1px;height:311px;background:#5f95d8"></div>
<div class="a" style="left:276px;top:507px;width:1px;height:311px;background:#5f95d8"></div>
<div class="a" style="left:428px;top:507px;width:1px;height:311px;background:#5f95d8"></div>
<div class="a" style="left:456px;top:507px;width:1px;height:311px;background:#5f95d8"></div>
<div class="a" style="left:522px;top:507px;width:1px;height:311px;background:#5f95d8"></div>
<div class="a" style="left:688px;top:507px;width:1px;height:311px;background:#5f95d8"></div>
<div class="a" style="left:820px;top:507px;width:1px;height:311px;background:#5f95d8"></div>
<div class="a" style="left:115px;top:549px;width:731px;height:3px;background:linear-gradient(#3a2208,#5a3812 60%,#a8743a)"></div>
<div class="a" style="left:115px;top:567px;width:731px;height:3px;background:linear-gradient(#3a2208,#5a3812 60%,#a8743a)"></div>
<div class="t" style="left:134px;width:72px;text-align:center;top:510.84px;font-size:12px;transform:scaleX(0.88);transform-origin:50% 0">Número de</div>
<div class="t" style="left:134px;width:72px;text-align:center;top:523.84px;font-size:12px;transform:scaleX(0.88);transform-origin:50% 0">comprobante</div>
<div class="t" style="left:206px;width:41px;text-align:center;top:510.84px;font-size:12px;transform:scaleX(0.88);transform-origin:50% 0">División</div>
<div class="t" style="left:247px;width:29px;text-align:center;top:510.84px;font-size:12px;transform:scaleX(0.88);transform-origin:50% 0">Tipo</div>
<div class="t" style="left:276px;width:152px;text-align:center;top:510.84px;font-size:12px;transform:scaleX(0.88);transform-origin:50% 0">Concepto -</div>
<div class="t" style="left:276px;width:152px;text-align:center;top:523.84px;font-size:12px;transform:scaleX(0.88);transform-origin:50% 0">Prestación de servicios</div>
<div class="t" style="left:428px;width:28px;text-align:center;top:510.84px;font-size:12px;transform:scaleX(0.88);transform-origin:50% 0">Lote</div>
<div class="t" style="left:456px;width:66px;text-align:center;top:510.84px;font-size:12px;transform:scaleX(0.88);transform-origin:50% 0">Fecha de</div>
<div class="t" style="left:456px;width:66px;text-align:center;top:523.84px;font-size:12px;transform:scaleX(0.88);transform-origin:50% 0">emisión</div>
<div class="t" style="left:522px;width:166px;text-align:center;top:510.84px;font-size:12px;transform:scaleX(0.88);transform-origin:50% 0">Estado</div>
<div class="t" style="left:688px;width:132px;text-align:center;top:510.84px;font-size:12px;transform:scaleX(0.88);transform-origin:50% 0">Cliente</div>
<div class="t" style="left:833px;top:510.84px;font-size:12px;transform:scaleX(0.88);transform-origin:0 0;">Im</div>
<svg class="a" style="left:118px;top:556px" width="14" height="10"><path d="M0 5H10M7 1.5L11.5 5L7 8.5" stroke="#000" stroke-width="2" fill="none"/></svg>
<div class="t" style="right:882px;top:554.84px;font-size:12px;transform:scaleX(0.92);transform-origin:100% 0;color:#d03838">536</div>
<div class="t" style="right:840px;top:554.84px;font-size:12px;transform:scaleX(0.92);transform-origin:100% 0;color:#d03838">1</div>
<div class="t" style="left:251px;top:554.84px;font-size:12px;transform:scaleX(0.88);transform-origin:0 0;color:#d03838">1FB</div>
<div class="t" style="left:280px;top:554.84px;font-size:12px;transform:scaleX(0.88);transform-origin:0 0;color:#d03838">Servicios</div>
<div class="t" style="left:460px;top:554.84px;font-size:12px;transform:scaleX(0.92);transform-origin:0 0;color:#d03838">28/12/2024</div>
<div class="t" style="left:526px;top:554.84px;font-size:12px;transform:scaleX(0.88);transform-origin:0 0;color:#d03838">Rechazado</div>
<div class="t" style="left:692px;top:554.84px;font-size:12px;transform:scaleX(0.88);transform-origin:0 0;color:#d03838">900030-EXENTO</div>
<svg class="a" style="left:118px;top:574px" width="14" height="10"><path d="M0 5H10M7 1.5L11.5 5L7 8.5" stroke="#000" stroke-width="2" fill="none"/></svg>
<div class="t" style="right:882px;top:572.84px;font-size:12px;transform:scaleX(0.92);transform-origin:100% 0;color:#d03838">537</div>
<div class="t" style="right:840px;top:572.84px;font-size:12px;transform:scaleX(0.92);transform-origin:100% 0;color:#d03838">1</div>
<div class="t" style="left:251px;top:572.84px;font-size:12px;transform:scaleX(0.88);transform-origin:0 0;color:#d03838">1FB</div>
<div class="t" style="left:280px;top:572.84px;font-size:12px;transform:scaleX(0.88);transform-origin:0 0;color:#d03838">Servicios</div>
<div class="t" style="left:460px;top:572.84px;font-size:12px;transform:scaleX(0.92);transform-origin:0 0;color:#d03838">28/12/2024</div>
<div class="t" style="left:526px;top:572.84px;font-size:12px;transform:scaleX(0.88);transform-origin:0 0;color:#d03838">Rechazado</div>
<div class="t" style="left:692px;top:572.84px;font-size:12px;transform:scaleX(0.88);transform-origin:0 0;color:#d03838">900020-CONSUMIDOR FI</div>
<svg class="a" style="left:118px;top:592px" width="14" height="10"><path d="M0 5H10M7 1.5L11.5 5L7 8.5" stroke="#000" stroke-width="2" fill="none"/></svg>
<div class="t" style="right:882px;top:590.84px;font-size:12px;transform:scaleX(0.92);transform-origin:100% 0;color:#d03838">538</div>
<div class="t" style="right:840px;top:590.84px;font-size:12px;transform:scaleX(0.92);transform-origin:100% 0;color:#d03838">1</div>
<div class="t" style="left:251px;top:590.84px;font-size:12px;transform:scaleX(0.88);transform-origin:0 0;color:#d03838">1FB</div>
<div class="t" style="left:280px;top:590.84px;font-size:12px;transform:scaleX(0.88);transform-origin:0 0;color:#d03838">Servicios</div>
<div class="t" style="left:460px;top:590.84px;font-size:12px;transform:scaleX(0.92);transform-origin:0 0;color:#d03838">28/12/2024</div>
<div class="t" style="left:526px;top:590.84px;font-size:12px;transform:scaleX(0.88);transform-origin:0 0;color:#d03838">Rechazado</div>
<div class="t" style="left:692px;top:590.84px;font-size:12px;transform:scaleX(0.88);transform-origin:0 0;color:#d03838">900020-CONSUMIDOR FI</div>
<svg class="a" style="left:118px;top:610px" width="14" height="10"><path d="M0 5H10M7 1.5L11.5 5L7 8.5" stroke="#000" stroke-width="2" fill="none"/></svg>
<div class="t" style="right:882px;top:608.84px;font-size:12px;transform:scaleX(0.92);transform-origin:100% 0;color:#d03838">539</div>
<div class="t" style="right:840px;top:608.84px;font-size:12px;transform:scaleX(0.92);transform-origin:100% 0;color:#d03838">1</div>
<div class="t" style="left:251px;top:608.84px;font-size:12px;transform:scaleX(0.88);transform-origin:0 0;color:#d03838">1FB</div>
<div class="t" style="left:280px;top:608.84px;font-size:12px;transform:scaleX(0.88);transform-origin:0 0;color:#d03838">Servicios</div>
<div class="t" style="left:460px;top:608.84px;font-size:12px;transform:scaleX(0.92);transform-origin:0 0;color:#d03838">28/12/2024</div>
<div class="t" style="left:526px;top:608.84px;font-size:12px;transform:scaleX(0.88);transform-origin:0 0;color:#d03838">Rechazado</div>
<div class="t" style="left:692px;top:608.84px;font-size:12px;transform:scaleX(0.88);transform-origin:0 0;color:#d03838">900020-CONSUMIDOR FI</div>
<svg class="a" style="left:118px;top:628px" width="14" height="10"><path d="M0 5H10M7 1.5L11.5 5L7 8.5" stroke="#000" stroke-width="2" fill="none"/></svg>
<div class="t" style="right:882px;top:626.84px;font-size:12px;transform:scaleX(0.92);transform-origin:100% 0;color:#d03838">540</div>
<div class="t" style="right:840px;top:626.84px;font-size:12px;transform:scaleX(0.92);transform-origin:100% 0;color:#d03838">1</div>
<div class="t" style="left:251px;top:626.84px;font-size:12px;transform:scaleX(0.88);transform-origin:0 0;color:#d03838">1FB</div>
<div class="t" style="left:280px;top:626.84px;font-size:12px;transform:scaleX(0.88);transform-origin:0 0;color:#d03838">Servicios</div>
<div class="t" style="left:460px;top:626.84px;font-size:12px;transform:scaleX(0.92);transform-origin:0 0;color:#d03838">30/12/2024</div>
<div class="t" style="left:526px;top:626.84px;font-size:12px;transform:scaleX(0.88);transform-origin:0 0;color:#d03838">Rechazado</div>
<div class="t" style="left:692px;top:626.84px;font-size:12px;transform:scaleX(0.88);transform-origin:0 0;color:#d03838">900020-CONSUMIDOR FI</div>
<svg class="a" style="left:118px;top:646px" width="14" height="10"><path d="M0 5H10M7 1.5L11.5 5L7 8.5" stroke="#000" stroke-width="2" fill="none"/></svg>
<div class="t" style="right:882px;top:644.84px;font-size:12px;transform:scaleX(0.92);transform-origin:100% 0;color:#d03838">541</div>
<div class="t" style="right:840px;top:644.84px;font-size:12px;transform:scaleX(0.92);transform-origin:100% 0;color:#d03838">1</div>
<div class="t" style="left:251px;top:644.84px;font-size:12px;transform:scaleX(0.88);transform-origin:0 0;color:#d03838">1FB</div>
<div class="t" style="left:280px;top:644.84px;font-size:12px;transform:scaleX(0.88);transform-origin:0 0;color:#d03838">Servicios</div>
<div class="t" style="left:460px;top:644.84px;font-size:12px;transform:scaleX(0.92);transform-origin:0 0;color:#d03838">30/12/2024</div>
<div class="t" style="left:526px;top:644.84px;font-size:12px;transform:scaleX(0.88);transform-origin:0 0;color:#d03838">Rechazado</div>
<div class="t" style="left:692px;top:644.84px;font-size:12px;transform:scaleX(0.88);transform-origin:0 0;color:#d03838">900020-CONSUMIDOR FI</div>
<svg class="a" style="left:118px;top:664px" width="14" height="10"><path d="M0 5H10M7 1.5L11.5 5L7 8.5" stroke="#000" stroke-width="2" fill="none"/></svg>
<div class="t" style="right:882px;top:662.84px;font-size:12px;transform:scaleX(0.92);transform-origin:100% 0;color:#d03838">542</div>
<div class="t" style="right:840px;top:662.84px;font-size:12px;transform:scaleX(0.92);transform-origin:100% 0;color:#d03838">1</div>
<div class="t" style="left:251px;top:662.84px;font-size:12px;transform:scaleX(0.88);transform-origin:0 0;color:#d03838">1FB</div>
<div class="t" style="left:280px;top:662.84px;font-size:12px;transform:scaleX(0.88);transform-origin:0 0;color:#d03838">Servicios</div>
<div class="t" style="left:460px;top:662.84px;font-size:12px;transform:scaleX(0.92);transform-origin:0 0;color:#d03838">30/12/2024</div>
<div class="t" style="left:526px;top:662.84px;font-size:12px;transform:scaleX(0.88);transform-origin:0 0;color:#d03838">Rechazado</div>
<div class="t" style="left:692px;top:662.84px;font-size:12px;transform:scaleX(0.88);transform-origin:0 0;color:#d03838">900020-CONSUMIDOR FI</div>
<svg class="a" style="left:118px;top:682px" width="14" height="10"><path d="M0 5H10M7 1.5L11.5 5L7 8.5" stroke="#000" stroke-width="2" fill="none"/></svg>
<div class="t" style="right:882px;top:680.84px;font-size:12px;transform:scaleX(0.92);transform-origin:100% 0;color:#d03838">543</div>
<div class="t" style="right:840px;top:680.84px;font-size:12px;transform:scaleX(0.92);transform-origin:100% 0;color:#d03838">1</div>
<div class="t" style="left:251px;top:680.84px;font-size:12px;transform:scaleX(0.88);transform-origin:0 0;color:#d03838">1FB</div>
<div class="t" style="left:280px;top:680.84px;font-size:12px;transform:scaleX(0.88);transform-origin:0 0;color:#d03838">Servicios</div>
<div class="t" style="left:460px;top:680.84px;font-size:12px;transform:scaleX(0.92);transform-origin:0 0;color:#d03838">30/12/2024</div>
<div class="t" style="left:526px;top:680.84px;font-size:12px;transform:scaleX(0.88);transform-origin:0 0;color:#d03838">Rechazado</div>
<div class="t" style="left:692px;top:680.84px;font-size:12px;transform:scaleX(0.88);transform-origin:0 0;color:#d03838">900020-CONSUMIDOR FI</div>
<svg class="a" style="left:118px;top:700px" width="14" height="10"><path d="M0 5H10M7 1.5L11.5 5L7 8.5" stroke="#000" stroke-width="2" fill="none"/></svg>
<div class="t" style="right:882px;top:698.84px;font-size:12px;transform:scaleX(0.92);transform-origin:100% 0;color:#d03838">544</div>
<div class="t" style="right:840px;top:698.84px;font-size:12px;transform:scaleX(0.92);transform-origin:100% 0;color:#d03838">1</div>
<div class="t" style="left:251px;top:698.84px;font-size:12px;transform:scaleX(0.88);transform-origin:0 0;color:#d03838">1FB</div>
<div class="t" style="left:280px;top:698.84px;font-size:12px;transform:scaleX(0.88);transform-origin:0 0;color:#d03838">Servicios</div>
<div class="t" style="left:460px;top:698.84px;font-size:12px;transform:scaleX(0.92);transform-origin:0 0;color:#d03838">30/12/2024</div>
<div class="t" style="left:526px;top:698.84px;font-size:12px;transform:scaleX(0.88);transform-origin:0 0;color:#d03838">Rechazado</div>
<div class="t" style="left:692px;top:698.84px;font-size:12px;transform:scaleX(0.88);transform-origin:0 0;color:#d03838">900020-CONSUMIDOR FI</div>
<svg class="a" style="left:118px;top:718px" width="14" height="10"><path d="M0 5H10M7 1.5L11.5 5L7 8.5" stroke="#000" stroke-width="2" fill="none"/></svg>
<div class="t" style="right:882px;top:716.84px;font-size:12px;transform:scaleX(0.92);transform-origin:100% 0;color:#d03838">545</div>
<div class="t" style="right:840px;top:716.84px;font-size:12px;transform:scaleX(0.92);transform-origin:100% 0;color:#d03838">1</div>
<div class="t" style="left:251px;top:716.84px;font-size:12px;transform:scaleX(0.88);transform-origin:0 0;color:#d03838">1FB</div>
<div class="t" style="left:280px;top:716.84px;font-size:12px;transform:scaleX(0.88);transform-origin:0 0;color:#d03838">Servicios</div>
<div class="t" style="left:460px;top:716.84px;font-size:12px;transform:scaleX(0.92);transform-origin:0 0;color:#d03838">30/12/2024</div>
<div class="t" style="left:526px;top:716.84px;font-size:12px;transform:scaleX(0.88);transform-origin:0 0;color:#d03838">Rechazado</div>
<div class="t" style="left:692px;top:716.84px;font-size:12px;transform:scaleX(0.88);transform-origin:0 0;color:#d03838">900020-CONSUMIDOR FI</div>
<svg class="a" style="left:118px;top:736px" width="14" height="10"><path d="M0 5H10M7 1.5L11.5 5L7 8.5" stroke="#000" stroke-width="2" fill="none"/></svg>
<div class="t" style="right:882px;top:734.84px;font-size:12px;transform:scaleX(0.92);transform-origin:100% 0;color:#111">546</div>
<div class="t" style="right:840px;top:734.84px;font-size:12px;transform:scaleX(0.92);transform-origin:100% 0;color:#111">1</div>
<div class="t" style="left:251px;top:734.84px;font-size:12px;transform:scaleX(0.88);transform-origin:0 0;color:#111">1FB</div>
<div class="t" style="left:280px;top:734.84px;font-size:12px;transform:scaleX(0.88);transform-origin:0 0;color:#111">Servicios</div>
<div class="t" style="left:460px;top:734.84px;font-size:12px;transform:scaleX(0.92);transform-origin:0 0;color:#111">30/12/2024</div>
<div class="t" style="left:526px;top:734.84px;font-size:12px;transform:scaleX(0.88);transform-origin:0 0;color:#111">No enviado a la AFIP</div>
<div class="t" style="left:692px;top:734.84px;font-size:12px;transform:scaleX(0.88);transform-origin:0 0;color:#111">900020-CONSUMIDOR FI</div>
<svg class="a" style="left:118px;top:754px" width="14" height="10"><path d="M0 5H10M7 1.5L11.5 5L7 8.5" stroke="#000" stroke-width="2" fill="none"/></svg>
<div class="t" style="right:882px;top:752.84px;font-size:12px;transform:scaleX(0.92);transform-origin:100% 0;color:#111">547</div>
<div class="t" style="right:840px;top:752.84px;font-size:12px;transform:scaleX(0.92);transform-origin:100% 0;color:#111">1</div>
<div class="t" style="left:251px;top:752.84px;font-size:12px;transform:scaleX(0.88);transform-origin:0 0;color:#111">1FB</div>
<div class="t" style="left:280px;top:752.84px;font-size:12px;transform:scaleX(0.88);transform-origin:0 0;color:#111">Servicios</div>
<div class="t" style="left:460px;top:752.84px;font-size:12px;transform:scaleX(0.92);transform-origin:0 0;color:#111">30/12/2024</div>
<div class="t" style="left:526px;top:752.84px;font-size:12px;transform:scaleX(0.88);transform-origin:0 0;color:#111">No enviado a la AFIP</div>
<div class="t" style="left:692px;top:752.84px;font-size:12px;transform:scaleX(0.88);transform-origin:0 0;color:#111">900020-CONSUMIDOR FI</div>
<svg class="a" style="left:118px;top:772px" width="14" height="10"><path d="M0 5H10M7 1.5L11.5 5L7 8.5" stroke="#000" stroke-width="2" fill="none"/></svg>
<div class="t" style="right:882px;top:770.84px;font-size:12px;transform:scaleX(0.92);transform-origin:100% 0;color:#111">548</div>
<div class="t" style="right:840px;top:770.84px;font-size:12px;transform:scaleX(0.92);transform-origin:100% 0;color:#111">1</div>
<div class="t" style="left:251px;top:770.84px;font-size:12px;transform:scaleX(0.88);transform-origin:0 0;color:#111">1FB</div>
<div class="t" style="left:280px;top:770.84px;font-size:12px;transform:scaleX(0.88);transform-origin:0 0;color:#111">Servicios</div>
<div class="t" style="left:460px;top:770.84px;font-size:12px;transform:scaleX(0.92);transform-origin:0 0;color:#111">30/12/2024</div>
<div class="t" style="left:526px;top:770.84px;font-size:12px;transform:scaleX(0.88);transform-origin:0 0;color:#111">No enviado a la AFIP</div>
<div class="t" style="left:692px;top:770.84px;font-size:12px;transform:scaleX(0.88);transform-origin:0 0;color:#111">900020-CONSUMIDOR FI</div>
<svg class="a" style="left:118px;top:790px" width="14" height="10"><path d="M0 5H10M7 1.5L11.5 5L7 8.5" stroke="#000" stroke-width="2" fill="none"/></svg>
<div class="t" style="right:882px;top:788.84px;font-size:12px;transform:scaleX(0.92);transform-origin:100% 0;color:#111">549</div>
<div class="t" style="right:840px;top:788.84px;font-size:12px;transform:scaleX(0.92);transform-origin:100% 0;color:#111">1</div>
<div class="t" style="left:251px;top:788.84px;font-size:12px;transform:scaleX(0.88);transform-origin:0 0;color:#111">1FB</div>
<div class="t" style="left:280px;top:788.84px;font-size:12px;transform:scaleX(0.88);transform-origin:0 0;color:#111">Servicios</div>
<div class="t" style="left:460px;top:788.84px;font-size:12px;transform:scaleX(0.92);transform-origin:0 0;color:#111">30/12/2024</div>
<div class="t" style="left:526px;top:788.84px;font-size:12px;transform:scaleX(0.88);transform-origin:0 0;color:#111">No enviado a la AFIP</div>
<div class="t" style="left:692px;top:788.84px;font-size:12px;transform:scaleX(0.88);transform-origin:0 0;color:#111">900020-CONSUMIDOR FI</div>
<svg class="a" style="left:118px;top:808px" width="14" height="10"><path d="M0 5H10M7 1.5L11.5 5L7 8.5" stroke="#000" stroke-width="2" fill="none"/></svg>
<div class="t" style="right:882px;top:806.84px;font-size:12px;transform:scaleX(0.92);transform-origin:100% 0;color:#111">550</div>
<div class="t" style="right:840px;top:806.84px;font-size:12px;transform:scaleX(0.92);transform-origin:100% 0;color:#111">1</div>
<div class="t" style="left:251px;top:806.84px;font-size:12px;transform:scaleX(0.88);transform-origin:0 0;color:#111">1FB</div>
<div class="t" style="left:280px;top:806.84px;font-size:12px;transform:scaleX(0.88);transform-origin:0 0;color:#111">Servicios</div>
<div class="t" style="left:460px;top:806.84px;font-size:12px;transform:scaleX(0.92);transform-origin:0 0;color:#111">30/12/2024</div>
<div class="t" style="left:526px;top:806.84px;font-size:12px;transform:scaleX(0.88);transform-origin:0 0;color:#111">No enviado a la AFIP</div>
<div class="t" style="left:692px;top:806.84px;font-size:12px;transform:scaleX(0.88);transform-origin:0 0;color:#111">900020-CONSUMIDOR FI</div>
<div class="a" style="left:846px;top:507px;width:16px;height:311px;background:#f0f0f0"></div>
<div class="a" style="left:847px;top:524px;width:14px;height:17px;background:#cdcdcd"></div>
<svg class="a" style="left:849px;top:512px" width="10" height="7"><path d="M0.8 6L5 1.5L9.2 6" stroke="#606060" stroke-width="1.6" fill="none"/></svg>
<div class="a" style="left:39px;top:816px;width:1026px;height:3px;background:linear-gradient(#f0f4f8,#dde6ef)"></div>
<div class="a" style="left:39px;top:819px;width:1026px;height:18px;background:linear-gradient(#e2edf9,#cfe0f4 40%,#c3d8f1)"></div>
<div class="m" style="left:40px;top:821.84px;font-size:12px;color:#1a2a44;letter-spacing:-0.35px">AFI1090 - 08-08-2024</div>
<div class="a" style="left:964px;top:819px;width:31px;height:18px;background:linear-gradient(#c0d8f4,#9dbde6 50%,#86abdd);border-left:1px solid #e6f0fa"></div>
<div class="a" style="left:995px;top:819px;width:36px;height:18px;background:linear-gradient(#c0d8f4,#9dbde6 50%,#86abdd);border-left:1px solid #e6f0fa"></div>
<div class="a" style="left:1031px;top:819px;width:34px;height:18px;background:linear-gradient(#c0d8f4,#9dbde6 50%,#86abdd);border-left:1px solid #e6f0fa"></div>
<div class="m" style="left:997px;top:821.84px;font-size:12px;color:#1a2a44;letter-spacing:0">NUM</div>
<div class="a" style="left:28px;top:838px;width:1050px;height:22px;background:#000"></div>
<div class="a" style="left:47px;top:837px;width:1018px;height:8px;background:#2a2a2a"></div>
<div class="a" style="left:726px;top:837px;width:49px;height:23px;background:#444"></div>
<div class="a" style="left:726px;top:845px;width:49px;height:15px;background:#3a3a3a"></div>
<div class="a" style="left:28px;top:845px;width:1037px;height:15px;overflow:hidden">
<svg class="a" style="left:27px;top:0px" width="26" height="15"><path d="M0 5L7 4V9H0ZM8 4L16 3V9H8ZM0 10H7V15H0ZM8 10H16V15H8Z" fill="#fff"/></svg>
<svg class="a" style="left:78px;top:0px" width="26" height="15"><circle cx="7" cy="8" r="5.5" fill="none" stroke="#fff" stroke-width="1.4"/></svg>
<svg class="a" style="left:122px;top:0px" width="26" height="15"><path d="M1 4H6V15H1ZM10 4H15V15H10Z" fill="none" stroke="#fff" stroke-width="1.3"/><path d="M7 3V6M7 9V12" stroke="#fff"/></svg>
<svg class="a" style="left:170px;top:0px" width="26" height="15"><circle cx="12" cy="12" r="11" fill="#e0463a"/><path d="M12 12L2 18A11 11 0 0 0 22 18Z" fill="#f4c20d"/><path d="M12 12L2 18A11 11 0 0 1 1.5 8Z" fill="#2a9d4a"/><circle cx="12" cy="12" r="5" fill="#fff"/><circle cx="12" cy="12" r="3.8" fill="#3d7ee8"/></svg>
<svg class="a" style="left:221px;top:0px" width="26" height="15"><path d="M1 6H9L11 8H22V15H1Z" fill="#f5c757"/><path d="M1 10H22V15H1Z" fill="#ffd97a"/></svg>
<svg class="a" style="left:270px;top:0px" width="26" height="15"><rect x="2" y="4" width="12" height="11" rx="3" fill="#f2c13a"/><path d="M16 5H20V9" stroke="#4caf50" stroke-width="2" fill="none"/><path d="M12 14L18 8" stroke="#e08020" stroke-width="2"/></svg>
<svg class="a" style="left:319px;top:0px" width="26" height="15"><path d="M6 4L20 6L15 15H2Z" fill="#aee0ee"/><path d="M6 4L20 6L19 8L5 6Z" fill="#e8f4f8"/></svg>
<svg class="a" style="left:466px;top:0px" width="26" height="15"><path d="M6 4L20 6L15 15H2Z" fill="#aee0ee"/><path d="M6 4L20 6L19 8L5 6Z" fill="#e8f4f8"/></svg>
<svg class="a" style="left:367px;top:0px" width="26" height="15"><rect x="0" y="0" width="23" height="15" fill="#0a1e6a"/><circle cx="11.5" cy="12" r="9" fill="#fff"/><path d="M5 12L9 9V15ZM18 12L14 9V15Z" fill="#0e5fc8"/><rect x="8" y="11" width="7" height="2" fill="#0e5fc8"/></svg>
<svg class="a" style="left:419px;top:0px" width="26" height="15"><rect x="1" y="3" width="15" height="12" fill="#c8d0e0" stroke="#889"/><rect x="6" y="7" width="5" height="6" fill="#f0c030"/></svg>
<svg class="a" style="left:514px;top:0px" width="26" height="15"><rect x="0.5" y="4.5" width="21" height="11" fill="#111" stroke="#888"/><path d="M3 9H7M10 9H12M14 12H19" stroke="#ddd"/></svg>
<svg class="a" style="left:564px;top:0px" width="26" height="15"><rect x="1" y="4" width="22" height="11" fill="#fff"/><rect x="1" y="4" width="22" height="5" fill="#2aa84a"/><path d="M10 14L17 8" stroke="#2aa84a" stroke-width="2"/></svg>
<svg class="a" style="left:612px;top:0px" width="26" height="15"><rect x="1" y="4" width="22" height="11" fill="#fff" stroke="#c03a2a" stroke-width="2"/><path d="M8 15Q6 8 12 7Q17 7 14 12Q12 14 11 13" stroke="#c03a2a" stroke-width="2" fill="none"/></svg>
<svg class="a" style="left:661px;top:0px" width="26" height="15"><rect x="1" y="4" width="22" height="11" rx="4" fill="#fff"/><circle cx="12" cy="14" r="7" fill="none" stroke="#1a8ae0" stroke-width="3"/></svg>
<svg class="a" style="left:710px;top:0px" width="26" height="15"><rect x="1" y="4" width="22" height="11" fill="#d8512e"/><circle cx="12" cy="13" r="6" fill="none" stroke="#f8d0c0" stroke-width="1.5" stroke-dasharray="8 3"/></svg>
</div>
<svg class="a" style="left:839px;top:851px" width="14" height="8"><path d="M1 7L7 1L13 7" stroke="#eee" stroke-width="1.3" fill="none"/></svg>
<svg class="a" style="left:862px;top:849px" width="16" height="11"><rect x="4.5" y="2.5" width="11" height="9" fill="none" stroke="#eee"/><path d="M0.5 0.5H3.5V6H0.5Z" stroke="#eee" fill="none"/></svg>
<svg class="a" style="left:886px;top:850px" width="16" height="10"><path d="M1 4H3L6 1V12L3 9H1Z" fill="none" stroke="#eee"/><circle cx="11" cy="9" r="3.5" fill="#e04040"/></svg>
<div class="a" style="left:1060px;top:838px;width:1px;height:22px;background:#666"></div>
<div class="m" style="left:914px;top:843.69px;font-size:11px;color:#eee;letter-spacing:0">ESP</div>
<div class="m" style="left:966px;top:842.69px;font-size:11px;color:#eee;letter-spacing:0">9:51</div>
<div class="a" style="left:1024px;top:849px;width:17px;height:11px;border:1.5px solid #eee;border-bottom:none"></div>
<div class="a" style="left:1077px;top:107px;width:1px;height:753px;background:#666"></div>
<div class="a" style="left:0px;top:860px;width:1085px;height:40px;background:#1f1f1f"></div>
<div class="a" style="left:1080px;top:860px;width:1px;height:40px;background:#555"></div>
<div class="a" style="left:166px;top:860px;width:49px;height:40px;background:#3b3b3b"></div>
<div class="a" style="left:0px;top:898px;width:14px;height:2px;background:#76b9ed"></div>
<div class="a" style="left:72px;top:898px;width:40px;height:2px;background:#76b9ed"></div>
<div class="a" style="left:121px;top:898px;width:40px;height:2px;background:#76b9ed"></div>
<div class="a" style="left:166px;top:898px;width:49px;height:2px;background:#76b9ed"></div>
<div class="a" style="left:218px;top:898px;width:40px;height:2px;background:#76b9ed"></div>
<svg class="a" style="left:0px;top:867px" width="26" height="26"><rect x="-4" y="2" width="12" height="10" fill="#e8c050"/><path d="M-4 12H10V24H-4Z" fill="#f0d890"/><path d="M-4 12L3 18L10 12" stroke="#b08030" fill="none"/></svg>
<svg class="a" style="left:30px;top:867px" width="26" height="26"><circle cx="13" cy="14" r="11" fill="#ff7139"/><circle cx="13" cy="14" r="11" fill="url(#ff)"/><defs><radialGradient id="ff" cx="0.6" cy="0.2" r="0.9"><stop offset="0" stop-color="#ffd43b"/><stop offset="0.5" stop-color="#ff7139" stop-opacity="0.6"/><stop offset="1" stop-color="#e3175a" stop-opacity="0.9"/></radialGradient></defs><circle cx="13" cy="15" r="5.5" fill="#7542e5"/><path d="M18 1Q24 8 22 16Q18 6 12 8Z" fill="#ffbd2e"/></svg>
<svg class="a" style="left:80px;top:867px" width="26" height="26"><rect x="3" y="2" width="12" height="16" rx="4" fill="#f2c13a"/><rect x="3" y="2" width="12" height="5" rx="3" fill="#ffe082"/><path d="M18 3H23V8M3 18V23H8" stroke="#4caf50" stroke-width="2.2" fill="none"/><path d="M11 22L21 12M11 12L21 22" stroke="#e08020" stroke-width="2.4"/></svg>
<svg class="a" style="left:129px;top:867px" width="26" height="26"><path d="M1 4H10L12 7H24V22H1Z" fill="#e8b63a"/><path d="M1 9H24V22H1Z" fill="#ffd66e"/><rect x="8" y="15" width="10" height="7" fill="#2a7ad0"/><rect x="10" y="17" width="6" height="5" fill="#ffd66e"/></svg>
<svg class="a" style="left:178px;top:867px" width="24" height="24" viewBox="0 0 16 16"><rect x="0.5" y="0.5" width="15" height="15" rx="2.5" fill="#161616" stroke="#2a2a2a"/><rect x="1.5" y="1.5" width="13" height="5" rx="1.5" fill="#3a3a3a" opacity="0.7"/><rect x="2" y="8" width="5" height="3.5" fill="#1d4fb8"/><path d="M3.6 8.5V11.5M5.3 8.5V11.5" stroke="#0a1a50" stroke-width="0.6"/><path d="M7.8 12V4H11Q13.6 4 13.6 6.4Q13.6 8.2 11.9 8.6L14 12H12L10.3 8.9H9.7V12Z M9.7 5.5V7.5H10.9Q11.8 7.5 11.8 6.5Q11.8 5.5 10.9 5.5Z" fill="#f2f2f2" fill-rule="evenodd"/></svg>
<svg class="a" style="left:226px;top:867px" width="26" height="26"><path d="M4 1H18L24 7V25H4Z" fill="#fff" stroke="#2a8a4a"/><rect x="0" y="5" width="14" height="15" fill="#1e7a3a"/><path d="M3 8L11 17M11 8L3 17" stroke="#fff" stroke-width="2.2"/><path d="M15 12H22M15 16H22M15 20H22" stroke="#2a8a4a"/></svg>
<svg class="a" style="left:275px;top:867px" width="26" height="26"><ellipse cx="11" cy="15" rx="10" ry="8" fill="#d8e8f0"/><circle cx="6" cy="14" r="2" fill="#e04040"/><circle cx="10" cy="10" r="2" fill="#40a040"/><circle cx="15" cy="10" r="2" fill="#4060e0"/><circle cx="8" cy="19" r="2" fill="#e0c040"/><path d="M23 2L13 20" stroke="#c08040" stroke-width="2.5"/></svg>
<svg class="a" style="left:323px;top:867px" width="26" height="26"><defs><linearGradient id="inf" x1="0" x2="1"><stop offset="0" stop-color="#3aa0f0"/><stop offset="1" stop-color="#7a40e0"/></linearGradient></defs><path d="M3 13C3 8 9 8 12.5 13C16 18 22 18 22 13C22 8 16 8 12.5 13C9 18 3 18 3 13Z" fill="none" stroke="url(#inf)" stroke-width="3.2"/></svg>
<svg class="a" style="left:374px;top:867px" width="26" height="26"><rect x="1" y="2" width="22" height="22" fill="#c23a3a"/><rect x="4" y="5" width="16" height="16" fill="#f8e0e0"/><path d="M7 18L12 10L17 16" stroke="#c23a3a" stroke-width="2" fill="none"/><path d="M8 7L17 16" stroke="#c23a3a" stroke-width="1.5"/></svg>
<svg class="a" style="left:422px;top:867px" width="26" height="26"><path d="M7 2L24 5L17 24H1Z" fill="#a6dcec"/><path d="M7 2L24 5L22 9L5 6Z" fill="#eaf6fa"/><path d="M1 24L17 24L24 5L25 8L19 25H1Z" fill="#7ab8cc"/></svg>
<svg class="a" style="left:856px;top:874px" width="14" height="8"><path d="M1 7L7 1L13 7" stroke="#eee" stroke-width="1.3" fill="none"/></svg>
<svg class="a" style="left:881px;top:872px" width="18" height="16"><rect x="4.5" y="2.5" width="13" height="9" fill="none" stroke="#eee"/><path d="M11 12V14M6 14.5H16M0.5 1.5H4.5V7H0.5Z" stroke="#eee" fill="none"/></svg>
<svg class="a" style="left:905px;top:872px" width="18" height="15"><path d="M1 5H4L8 1V14L4 10H1Z" fill="none" stroke="#eee"/><path d="M11 4Q13 7.5 11 11M13.5 2Q17 7.5 13.5 13" stroke="#eee" fill="none"/></svg>
<div class="m" style="left:934px;top:866.69px;font-size:11px;color:#f0f0f0;letter-spacing:0">ESP</div>
<div class="m" style="left:938px;top:883.69px;font-size:11px;color:#f0f0f0;letter-spacing:0">ES</div>
<div class="m" style="left:983px;top:866.69px;font-size:11px;color:#f0f0f0;letter-spacing:0">09:51</div>
<div class="m" style="left:968px;top:883.69px;font-size:11px;color:#f0f0f0;letter-spacing:0">02/01/2025</div>
<svg class="a" style="left:1044px;top:871px" width="17" height="17"><path d="M0.75 0.75H16.25V12.25H11L8.5 15.5L6 12.25H0.75Z" fill="none" stroke="#eee" stroke-width="1.4"/></svg>
</body></html>
